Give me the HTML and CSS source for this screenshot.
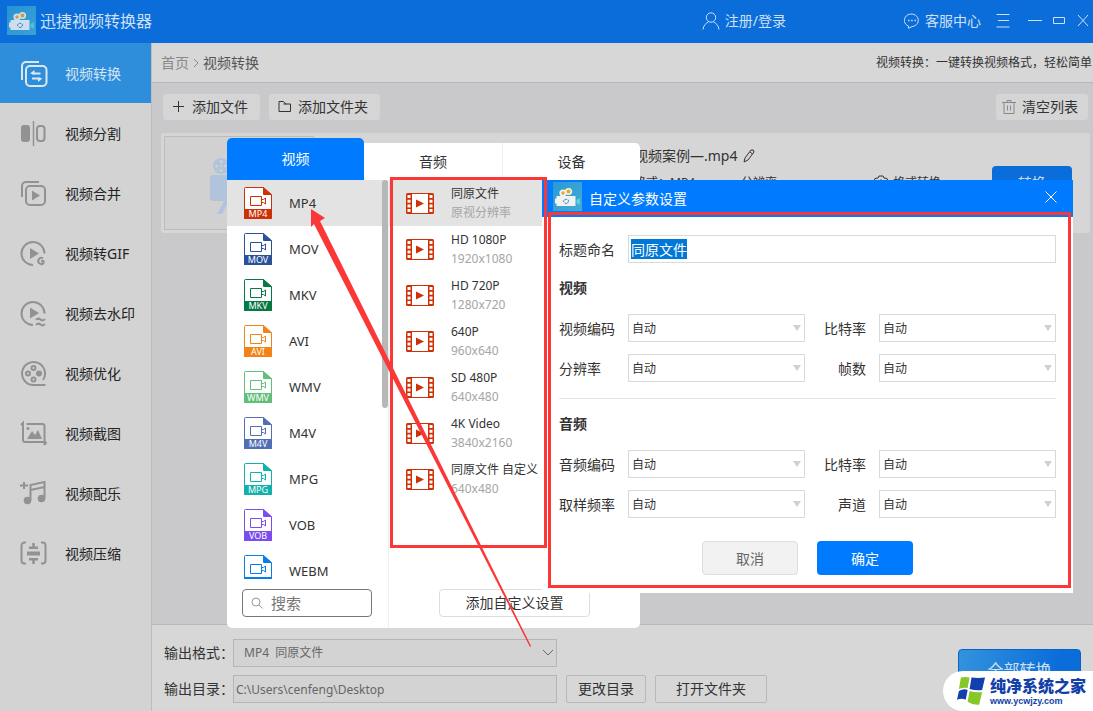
FILE: index.html
```html
<!DOCTYPE html>
<html lang="zh-CN">
<head>
<meta charset="utf-8">
<meta name="viewport" content="width=device-width, initial-scale=1">
<title>迅捷视频转换器</title>
<link rel="stylesheet" href="styles.css">
</head>
<body>
<svg class="sprites" aria-hidden="true">
  <defs>
    <linearGradient id="logo-bg" x1="0" y1="0" x2="1" y2="1"><stop offset="0" stop-color="#2a9ad6"/><stop offset="1" stop-color="#45abd2"/></linearGradient>
  </defs>
  <symbol id="logo" viewBox="0 0 29 29">
    <rect width="29" height="29" fill="url(#logo-bg)"/>
    <circle cx="10" cy="11" r="3.6" fill="#f2f2ee"/><circle cx="10" cy="11" r="1.7" fill="#e0a83a"/>
    <circle cx="15.5" cy="9.5" r="3.6" fill="#f2f2ee"/><circle cx="15.5" cy="9.5" r="1.9" fill="#f0a818"/>
    <path d="M3.5 14h19v10h-19zM2 16.500h2v5H2z" fill="#f2f2f0"/>
    <path d="M23.500 18l3.500-2v7l-3.500-2z" fill="#57d2e4"/>
    <path d="M10.500 20a2.500 2.500 0 0 1 3.500-2.500M15 17.500a2.500 2.500 0 0 1-3.500 3.500" fill="none" stroke="#3d8fd0"/>
  </symbol>
  <symbol id="file" viewBox="0 0 28 32">
    <path d="M1.500.5H19.500L27.500 7.500V31.500H.5V1.500a1 1 0 0 1 1-1z" fill="#fff" stroke="currentColor"/>
    <path d="M19 0l9 8h-8a1 1 0 0 1-1-1zM0 22h28v9a1 1 0 0 1-1 1H1a1 1 0 0 1-1-1z" fill="currentColor"/>
    <path d="M6.500 9.500h11v9h-11zM18 12.500h1.500l2-1.500v6l-2-1.500H18" fill="none" stroke="currentColor"/>
  </symbol>
  <symbol id="file-cut" viewBox="0 0 28 24">
    <path d="M1.500.5H19.500L27.500 7.500V23H.5V1.500a1 1 0 0 1 1-1z" fill="#fff" stroke="currentColor"/>
    <path d="M19 0l9 8h-8a1 1 0 0 1-1-1zM0 22h28v2H0z" fill="currentColor"/>
    <path d="M6.500 9.500h11v9h-11zM18 12.500h1.500l2-1.500v6l-2-1.500H18" fill="none" stroke="currentColor"/>
  </symbol>
  <symbol id="film" viewBox="0 0 28 21">
    <rect width="28" height="21" rx="1.500" fill="#cf3107"/>
    <path d="M6 1h16v19H6z" fill="#fff"/>
    <path d="M1.500 2h3v3h-3zM1.500 6.700h3v3h-3zM1.500 11.400h3v3h-3zM1.500 16h3v3h-3zM23.500 2h3v3h-3zM23.500 6.700h3v3h-3zM23.500 11.400h3v3h-3zM23.500 16h3v3h-3z" fill="#fff"/>
    <path d="M10 6.500l8 4-8 4z" fill="#cf3107"/>
  </symbol>
</svg>

<header class="titlebar">
  <svg class="app-logo"><use href="#logo"/></svg>
  <h1 class="app-name">迅捷视频转换器</h1>
  <a class="bar-link login" href="#login">
    <svg class="ic-user" viewBox="0 0 18 18"><circle cx="9" cy="5.500" r="4.700"/><path d="M1 17.500c.4-4 3-6.500 5.500-7.500M17 17.500c-.4-4-3-6.500-5.500-7.500"/></svg>注册/登录</a>
  <a class="bar-link service" href="#service">
    <svg class="ic-chat" viewBox="0 0 16 16"><path d="M4.500 15.300v-2.200A7 6.300 0 1 1 8 13.600z"/><path d="M4 7.500h1.500M7.200 7.500h1.500M10.500 7.500h1.500" stroke-width="1.500"/></svg>客服中心</a>
  <button class="win-btn menu" aria-label="菜单"><svg viewBox="0 0 14 14"><path d="M.5.500h13M2 6.500h11M.5 13h13"/></svg></button>
  <button class="win-btn min" aria-label="最小化"><svg viewBox="0 0 14 14"><path d="M0 6.500h14"/></svg></button>
  <button class="win-btn max" aria-label="最大化"><svg viewBox="0 0 14 14"><path d="M1.500 3.500h11v6h-11z"/></svg></button>
  <button class="win-btn close" aria-label="关闭"><svg viewBox="0 0 14 14"><path d="M2 1l10 11M12 1L2 12"/></svg></button>
</header>

<div class="shell">
  <nav class="sidebar">
    <a class="nav active" href="#convert"><svg viewBox="0 0 28 28"><path d="M2 20V6a4 4 0 0 1 4-4h13"/><rect x="6" y="6" width="20.500" height="20" rx="4"/><path d="M12 13.500h8.500M12 18.500h8.500"/><path class="solid" d="M10 13.500l4.500-3.500v4.500zM22.500 18.500l-4.500 3.500v-4.500z"/></svg>视频转换</a>
    <a class="nav" href="#split"><svg viewBox="0 0 28 28"><rect x="1" y="5" width="9" height="17" rx="3" class="solid"/><path d="M13.500 1v25" stroke-width="1.500"/><rect x="17" y="6" width="7.500" height="15" rx="3"/></svg>视频分割</a>
    <a class="nav" href="#merge"><svg viewBox="0 0 28 28"><path d="M2 17V6a4 4 0 0 1 4-4h13"/><rect x="6" y="6" width="19" height="19" rx="4"/><path class="solid" d="M12 10.500l8 5-8 5z"/></svg>视频合并</a>
    <a class="nav" href="#gif"><svg viewBox="0 0 28 28"><path d="M13 25A11.500 11.500 0 1 1 24.500 13.500"/><path class="solid" d="M10 8l9 5.500-9 5.500z"/><path d="M23 18.500a3 3 0 1 0 .5 4.500v-2H21"/></svg>视频转GIF</a>
    <a class="nav" href="#watermark"><svg viewBox="0 0 28 28"><path d="M13 25A11.500 11.500 0 1 1 24.500 13.500"/><path class="solid" d="M10 7.500l9 5.500-9 5.500z"/><path d="M16 20q2-2.500 4.500-.5t4.500-.5M16 25q2-2.500 4.500-.5t4.500-.5"/></svg>视频去水印</a>
    <a class="nav" href="#optimize"><svg viewBox="0 0 28 28"><path d="M25.500 25H13.500A11.500 11.500 0 1 1 23 20"/><circle cx="13.500" cy="8" r="2"/><circle cx="8" cy="13.500" r="2"/><circle cx="13.500" cy="19.500" r="2"/><circle cx="19" cy="13.500" r="3" class="solid"/></svg>视频优化</a>
    <a class="nav" href="#shot"><svg viewBox="0 0 28 28"><path d="M1 5l2-2v17a2 2 0 0 0 2 2h21M6.500 4h16a2 2 0 0 1 2 2v19M24.500 25l2-3"/><path class="solid" d="M7 19l5-8 3 4 3-5 4 9z"/><circle class="solid" cx="8" cy="8.500" r="1.500"/></svg>视频截图</a>
    <a class="nav" href="#music"><svg viewBox="0 0 28 28"><path d="M0 5.500h8M4 2v7M10.500 20V5l14-3v16M10.500 10l14-3"/><circle class="solid" cx="7.500" cy="20.500" r="3.800"/><circle class="solid" cx="21.500" cy="18.500" r="3.800"/></svg>视频配乐</a>
    <a class="nav" href="#compress"><svg viewBox="0 0 28 28"><path d="M6 2.500H4.500a3 3 0 0 0-3 3v15a3 3 0 0 0 3 3H6M21 2.500h1.500a3 3 0 0 1 3 3v15a3 3 0 0 1-3 3H21"/><path d="M7 13.500h13" stroke-width="4"/><path d="M9 7.800h9M13.500 3v5M9 19.200h9M13.500 19v5" stroke-width="2.500"/></svg>视频压缩</a>
  </nav>

  <main class="main">
    <div class="crumbs">
      <a href="#home">首页</a>
      <svg class="crumb-arrow" viewBox="0 0 6 10"><path d="M1 1l4 4-4 4"/></svg>
      <span class="here">视频转换</span>
      <span class="slogan">视频转换：一键转换视频格式，轻松简单</span>
    </div>

    <section class="work">
      <div class="toolbar">
        <button class="tool"><svg viewBox="0 0 14 14"><path d="M6.500 1v11M1 6.500h11"/></svg>添加文件</button>
        <button class="tool"><svg viewBox="0 0 14 14"><path d="M1 11.500v-10h4.500l2 2.500h5v7.500zM5.500 4h3"/></svg>添加文件夹</button>
        <button class="tool clear"><svg viewBox="0 0 14 14"><path d="M0 2.500h14M5 2.500v-2h4v2M2 2.500v11h10v-11M5.500 5.500v5M8.500 5.500v5"/></svg>清空列表</button>
      </div>
      <article class="card">
        <div class="thumb">
          <svg viewBox="0 0 60 64"><circle cx="11" cy="8" r="8"/><circle cx="33" cy="8" r="9"/><rect x="0" y="17" width="44" height="26" rx="3"/><path d="M46 26l11-6v20l-11-6zM14 43h5l-7 13H7zM28 43h5l7 13h-5z"/><g class="holes"><circle cx="11" cy="3.500" r="1.500"/><circle cx="11" cy="12.500" r="1.500"/><circle cx="6.500" cy="8" r="1.500"/><circle cx="15.500" cy="8" r="1.500"/><circle cx="11" cy="8" r="1"/></g></svg>
        </div>
        <div class="output">
          <p class="out-name">视频案例—.mp4 <svg viewBox="0 0 12 14"><path d="M1 13l1-4 6-8q3-1 3 2l-6 8zM7 3l2.500 2"/></svg></p>
          <p class="out-meta"><span>格式：MP4</span><span>分辨率</span></p>
        </div>
        <a class="format-link" href="#format"><svg viewBox="0 0 16 16"><path d="M6 1h4l1 2 3 .5 1.500 3.500-1.500 2 1 3-3 2-2-.500-2 2-2-2-2 .500-3-2 1-3L.5 7 2 3.500 5 3z"/><circle cx="8" cy="8" r="3"/></svg>格式转换</a>
        <button class="convert">转换</button>
      </article>
    </section>

    <footer class="bottom">
      <div class="fields">
        <label for="out-format">输出格式：</label>
        <div class="pick"><select id="out-format"><option>MP4&nbsp; 同原文件</option></select><svg viewBox="0 0 12 7"><path d="M1 1l5 5 5-5"/></svg></div>
        <span></span><span></span>
        <label for="out-dir">输出目录：</label>
        <input id="out-dir" type="text" value="C:\Users\cenfeng\Desktop">
        <button>更改目录</button>
        <button>打开文件夹</button>
      </div>
      <button class="convert-all">全部转换</button>
    </footer>
  </main>
</div>

<section class="popup" aria-label="输出格式">
  <div class="tabs" role="tablist">
    <button class="tab on" role="tab">视频</button>
    <button class="tab" role="tab">音频</button>
    <button class="tab" role="tab">设备</button>
  </div>
  <div class="panes">
    <div class="formats">
      <ul class="format-list">
        <li class="fmt mp4 sel"><svg><use href="#file"/><text x="14" y="30">MP4</text></svg>MP4</li>
        <li class="fmt mov"><svg><use href="#file"/><text x="14" y="30">MOV</text></svg>MOV</li>
        <li class="fmt mkv"><svg><use href="#file"/><text x="14" y="30">MKV</text></svg>MKV</li>
        <li class="fmt avi"><svg><use href="#file"/><text x="14" y="30">AVI</text></svg>AVI</li>
        <li class="fmt wmv"><svg><use href="#file"/><text x="14" y="30">WMV</text></svg>WMV</li>
        <li class="fmt m4v"><svg><use href="#file"/><text x="14" y="30">M4V</text></svg>M4V</li>
        <li class="fmt mpg"><svg><use href="#file"/><text x="14" y="30">MPG</text></svg>MPG</li>
        <li class="fmt vob"><svg><use href="#file"/><text x="14" y="30">VOB</text></svg>VOB</li>
        <li class="fmt webm"><svg viewBox="0 0 28 32"><use href="#file-cut" width="28" height="24"/></svg>WEBM</li>
      </ul>
      <span class="scrollbar"></span>
      <label class="search"><svg viewBox="0 0 12 12"><circle cx="5" cy="5" r="4"/><path d="M8 8l3.500 3.500"/></svg><input type="search" placeholder="搜索" aria-label="搜索"></label>
    </div>
    <div class="presets">
      <ul class="preset-list">
        <li class="preset sel"><svg><use href="#film"/></svg><div><b>同原文件</b><small>原视分辨率</small></div></li>
        <li class="preset"><svg><use href="#film"/></svg><div><b>HD 1080P</b><small>1920x1080</small></div></li>
        <li class="preset"><svg><use href="#film"/></svg><div><b>HD 720P</b><small>1280x720</small></div></li>
        <li class="preset"><svg><use href="#film"/></svg><div><b>640P</b><small>960x640</small></div></li>
        <li class="preset"><svg><use href="#film"/></svg><div><b>SD 480P</b><small>640x480</small></div></li>
        <li class="preset"><svg><use href="#film"/></svg><div><b>4K Video</b><small>3840x2160</small></div></li>
        <li class="preset"><svg><use href="#film"/></svg><div><b>同原文件 自定义</b><small>640x480</small></div></li>
      </ul>
      <button class="add-custom">添加自定义设置</button>
    </div>
  </div>
</section>

<form class="dialog" role="dialog" aria-labelledby="dlg-title">
  <header class="dlg-head">
    <svg class="app-logo"><use href="#logo"/></svg>
    <h2 id="dlg-title">自定义参数设置</h2>
    <button type="button" class="dlg-close" aria-label="关闭"><svg viewBox="0 0 12 12"><path d="M.5.500l11 11M11.500.500l-11 11"/></svg></button>
  </header>
  <div class="dlg-body">
    <div class="row name"><label for="p-name">标题命名</label><input id="p-name" type="text" value="同原文件" autofocus></div>
    <h3>视频</h3>
    <div class="row">
      <label for="v-codec">视频编码</label><div class="combo"><select id="v-codec"><option>自动</option></select></div>
      <label for="v-rate" class="end">比特率</label><div class="combo"><select id="v-rate"><option>自动</option></select></div>
      <label for="v-res">分辨率</label><div class="combo"><select id="v-res"><option>自动</option></select></div>
      <label for="v-fps" class="end">帧数</label><div class="combo"><select id="v-fps"><option>自动</option></select></div>
    </div>
    <hr>
    <h3>音频</h3>
    <div class="row">
      <label for="a-codec">音频编码</label><div class="combo"><select id="a-codec"><option>自动</option></select></div>
      <label for="a-rate" class="end">比特率</label><div class="combo"><select id="a-rate"><option>自动</option></select></div>
      <label for="a-freq">取样频率</label><div class="combo"><select id="a-freq"><option>自动</option></select></div>
      <label for="a-chan" class="end">声道</label><div class="combo"><select id="a-chan"><option>自动</option></select></div>
    </div>
    <div class="actions"><button type="button" class="cancel">取消</button><button type="button" class="ok">确定</button></div>
  </div>
</form>

<svg class="marks" viewBox="0 0 1093 711" aria-hidden="true">
  <rect x="391.500" y="178.500" width="154" height="368"/>
  <rect x="549.500" y="213.500" width="520" height="373"/>
  <path d="M311 209L325 218 320 221 531 646 530 647 314 224 311 227z"/>
</svg>

<aside class="watermark">
  <svg viewBox="0 0 30 30"><path d="M4 1q4-1 9 0l-2 11q-4-1-9 1z" fill="#86c82a"/><path d="M15 1q7 1 14 0l-3 13q-6 1-13-1z" fill="#123fae"/><path d="M2 15q5-3 9-1l-2 10q-4-2-9 0z" fill="#123fae"/><path d="M13 15q7 2 13 1l-3 13q-6 1-12-3z" fill="#86c82a"/></svg>
  <div><strong>纯净系统之家</strong><span>www.ycwjzy.com</span></div>
</aside>
<script>
  document.getElementById('p-name').focus();
  document.getElementById('p-name').select();
</script>
</body>
</html>
```

FILE: styles.css
```css
* { box-sizing: border-box; }
body {
  margin: 0;
  min-height: 100vh;
  position: relative;
  display: flex;
  flex-direction: column;
  overflow: hidden;
  font: 14px/20px "Noto Sans", "Noto Sans CJK SC", sans-serif;
  color: #333;
  background: #d7d7d7;
}
button, input, select { font: inherit; color: inherit; margin: 0; outline: none; }
button { padding: 0; border: 0; background: none; text-align: center; }
a { color: inherit; text-decoration: none; }
h1, h2, h3, p, ul { margin: 0; padding: 0; font-weight: normal; list-style: none; }
svg { flex: none; fill: none; stroke: currentColor; }
symbol, use { stroke: none; }
.sprites { position: absolute; width: 0; height: 0; }
.app-logo { width: 29px; height: 29px; stroke: none; }

/* Title bar */
.titlebar {
  display: flex;
  align-items: center;
  height: 43px;
  padding: 0 3px 2px 7px;
  background: #0a6dda;
  color: #cfe0f4;
}
.titlebar .app-logo { opacity: .85; }
.app-name { margin-left: 4px; font-size: 16px; }
.bar-link { display: flex; align-items: center; gap: 5px; }
.login { margin-left: auto; }
.service { margin-left: 118px; }
.ic-user { width: 18px; height: 18px; }
.ic-chat { width: 16px; height: 16px; }
.win-btn { height: 14px; width: 14px; }
.win-btn svg { display: block; width: 14px; height: 14px; }
.menu { margin-left: 15px; }
.min { margin-left: 18px; }
.max { margin-left: 10px; }
.close { margin-left: 10px; }

/* Navigation */
.shell { flex: 1; display: flex; }
.sidebar { width: 152px; flex: none; background: #d3d3d3; border-right: 1px solid #bdbdbd; }
.nav { display: flex; align-items: center; gap: 17px; height: 60px; padding: 2px 0 0 20px; color: #222; }
.nav svg { width: 28px; height: 28px; stroke: #929292; stroke-width: 2; }
.nav .solid { fill: #929292; stroke: none; }
.nav.active { background: #2e8edb; color: #d5e6f5; }
.nav.active svg { stroke: #dbe7f1; }
.nav.active .solid { fill: #dbe7f1; }

/* Work area */
.main { flex: 1; min-width: 0; display: flex; flex-direction: column; background: #c9c9cb; }
.crumbs {
  display: flex;
  align-items: center;
  height: 40px;
  padding: 0 1px 0 9px;
  background: #d7d7d7;
  border-bottom: 1px solid #b8b8b8;
  color: #888;
}
.crumb-arrow { width: 6px; height: 10px; margin: 0 4px; }
.here { color: #555; }
.slogan { margin-left: auto; font-size: 12px; color: #333; white-space: nowrap; }
.work { flex: 1; padding: 11px 3px 0 9px; }
.toolbar { display: flex; gap: 9px; padding: 0 2px; }
.tool { display: flex; align-items: center; gap: 6px; height: 26px; padding: 0 12px 0 9px; border-radius: 3px; background: #d5d5d6; }
.tool svg { width: 14px; height: 14px; }
.tool.clear { margin-left: auto; padding: 0 10px 0 6px; }
.clear svg { stroke: #888; }
.card { display: flex; align-items: flex-start; margin-top: 13px; padding: 3px 18px 3px 3px; background: #d6d6d6; border-radius: 2px; }
.thumb { width: 150px; height: 94px; border: 1px solid #bcbcbc; background: #d1d1d2; padding: 21px 0 0 45px; }
.thumb svg { width: 60px; height: 64px; fill: #b2c3dc; stroke: none; }
.thumb .holes { fill: #d1d1d2; }
.output { margin: 10px auto 0 320px; }
.out-name { display: flex; align-items: center; gap: 6px; }
.out-name svg { width: 12px; height: 14px; }
.out-meta { display: flex; gap: 46px; margin-top: 7px; font-size: 12px; }
.format-link { display: flex; align-items: center; gap: 4px; margin-top: 37px; font-size: 12px; }
.format-link svg { width: 16px; height: 16px; }
.convert { width: 80px; height: 34px; margin: 30px 0 0 51px; border-radius: 4px; background: #0a6dda; color: #cfe0f4; }

/* Output settings */
.bottom { display: flex; align-items: flex-start; justify-content: space-between; height: 87px; padding: 14px 12px 0 12px; background: #d7d7d7; border-top: 1px solid #b8b8b8; }
.fields { display: grid; grid-template-columns: 60px 324px 80px 112px; gap: 8px 9px; align-items: center; }
.fields label { white-space: nowrap; }
.fields input, .fields select { width: 100%; height: 28px; border: 1px solid #b5b5b5; border-radius: 0; background: #d3d3d3; font-size: 12px; color: #666; padding: 0 2px; }
.fields select { appearance: none; padding-left: 10px; display: block; }
.fields button { height: 28px; border: 1px solid #b8b8b8; border-radius: 2px; }
.pick, .combo { position: relative; }
.pick svg { position: absolute; right: 3px; top: 10px; width: 12px; height: 7px; color: #666; }
.convert-all { width: 123px; height: 42px; margin-top: 10px; border: 1px solid #0a62c4; border-radius: 4px; background: linear-gradient(100deg, #3493dc, #0a6dda 80%); color: #cfe0f4; font-size: 16px; }

/* Format menu */
.popup { position: absolute; left: 227px; top: 138px; width: 413px; }
.tabs { display: grid; grid-template-columns: 137px 1fr 1fr; align-items: end; }
.tab { height: 37px; background: #fff; color: #333; }
.tab + .tab + .tab { border-left: 1px solid #eee; border-radius: 0 5px 0 0; }
.tab.on { height: 42px; background: #007bff; color: #fff; border-radius: 5px 5px 0 0; }
.panes { display: flex; height: 448px; background: #fff; border-radius: 0 0 5px 5px; }
.formats { position: relative; width: 162px; border-right: 1px solid #eee; }
.format-list { height: 399px; overflow: hidden; }
.fmt { display: flex; align-items: center; gap: 17px; height: 46px; padding-left: 17px; font-size: 13px; }
.fmt svg { width: 28px; height: 32px; stroke: none; }
.fmt text { fill: #fff; font-size: 9px; text-anchor: middle; }
.sel { background: #e3e3e3; }
.mp4 svg { color: #cf3107; }
.mov svg { color: #2a519c; }
.mkv svg { color: #057843; }
.avi svg { color: #f38316; }
.wmv svg { color: #60bf78; }
.m4v svg { color: #526fb5; }
.mpg svg { color: #13b1ac; }
.vob svg { color: #7b4cf0; }
.webm svg { color: #087ce9; }
.scrollbar { position: absolute; top: 0; right: 0; width: 6px; height: 228px; border-radius: 3px; background: #b7b7b7; }
.search { display: flex; align-items: center; gap: 8px; width: 130px; height: 28px; margin: 10px 0 0 15px; padding: 0 8px; border: 1px solid #777; border-radius: 4px; }
.search svg { width: 12px; height: 12px; color: #999; }
.search input { flex: 1; min-width: 0; border: 0; padding: 0; background: none; font-size: 15px; }
.search input::placeholder { color: #777; }
.presets { flex: 1; display: flex; flex-direction: column; }
.preset-list { height: 409px; }
.preset { display: flex; align-items: center; gap: 17px; height: 46px; padding-left: 17px; font-size: 12px; line-height: 19px; white-space: nowrap; }
.preset svg { width: 28px; height: 21px; stroke: none; }
.preset b, .preset small { display: block; font-size: 12px; font-weight: normal; }
.preset small { color: #a5a5a5; }
.add-custom { width: 151px; height: 28px; margin-left: 50px; border: 1px solid #ddd; border-radius: 4px; }

/* Parameter dialog */
.dialog { position: absolute; left: 542px; top: 180px; width: 531px; background: #fff; }
.dlg-head { display: flex; align-items: center; height: 37px; padding: 0 16px 4px 11px; background: #007bff; color: #fff; }
.dlg-head h2 { margin: 5px 0 0 7px; font-size: 14px; }
.dlg-close { margin-left: auto; width: 12px; height: 12px; }
.dlg-close svg { display: block; width: 12px; height: 12px; }
.dlg-body { padding: 18px 17px; }
.row { display: grid; grid-template-columns: 69px 1fr 74px 1fr; gap: 12px 0; align-items: center; }
.row.name { grid-template-columns: 69px 1fr; }
.row label { padding-top: 2px; }
.row .end { text-align: right; padding-right: 13px; }
.dlg-body h3 { margin: 15px 0 16px; font-size: 14px; font-weight: bold; }
.dlg-body hr { margin: 16px 0 15px; border: 0; border-top: 1px solid #e6e6e6; }
.dlg-body input, .combo select { display: block; width: 100%; height: 28px; border: 1px solid #d9d9d9; border-radius: 0; background: #fff; padding: 0 2px; }
.combo select { appearance: none; padding: 2px 3px 0; font-size: 12px; }
.combo::after { content: ""; position: absolute; right: 4px; top: 11px; border: 4px solid transparent; border-top: 6px solid #d0d0d0; border-bottom: 0; }
.dlg-body input::selection { background: #0078d7; color: #fff; }
.actions { display: flex; justify-content: center; gap: 19px; margin-top: 23px; }
.actions button { width: 96px; height: 34px; padding-top: 2px; border-radius: 4px; }
.actions .cancel { border: 1px solid #ddd; background: #f2f2f2; color: #666; }
.actions .ok { background: #007bff; color: #fff; }

/* Annotation layer */
.marks { position: absolute; left: 0; top: 0; width: 1093px; height: 711px; pointer-events: none; stroke: #fb3737; stroke-width: 3; }
.marks path { fill: #fb3737; stroke: none; }
.watermark { position: absolute; right: 0; bottom: 0; display: flex; align-items: center; gap: 4px; height: 40px; padding: 0 7px 0 14px; background: #fff; border-radius: 20px 0 0 20px; color: #1240a8; }
.watermark svg { width: 29px; height: 30px; stroke: none; }
.watermark strong, .watermark span { display: block; }
.watermark strong { font-size: 16px; line-height: 20px; font-weight: 900; }
.watermark span { font: bold 9px/10px "Liberation Sans", sans-serif; }
```
